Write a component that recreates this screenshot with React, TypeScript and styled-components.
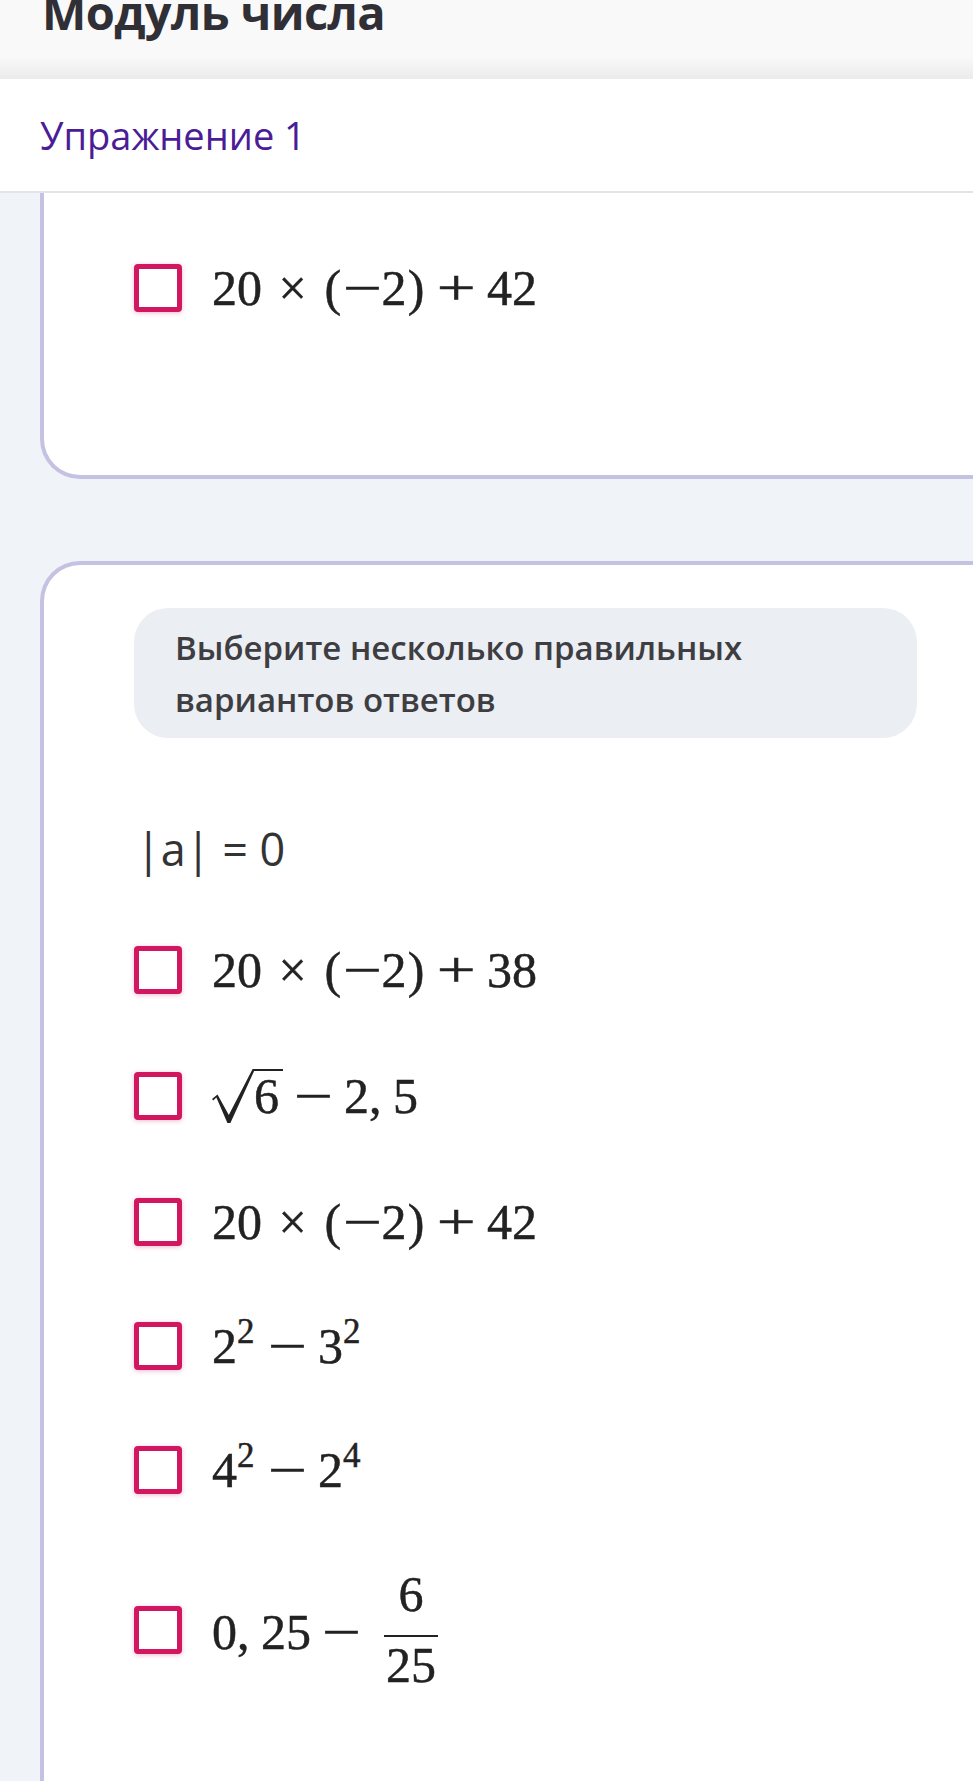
import styled, { createGlobalStyle } from "styled-components";

const GlobalStyle = createGlobalStyle`
  html,
  body {
    margin: 0;
    padding: 0;
    background: #f0f3f7;
  }
  body {
    font-family: "Open Sans", "Noto Sans", sans-serif;
  }
`;

type Piece =
  | { t: "n"; v: string }
  | { t: "bin"; v: string; stretch?: boolean }
  | { t: "neg" }
  | { t: "paren"; v: string }
  | { t: "comma" }
  | { t: "sup"; base: string; exp: string }
  | { t: "sqrt"; v: string }
  | { t: "frac"; num: string; den: string };

const product = (last: string): Piece[] => [
  { t: "n", v: "20" },
  { t: "bin", v: "×" },
  { t: "paren", v: "(" },
  { t: "neg" },
  { t: "n", v: "2" },
  { t: "paren", v: ")" },
  { t: "bin", v: "+", stretch: true },
  { t: "n", v: last },
];

const firstCard: Piece[][] = [product("42")];

const secondCard: Piece[][] = [
  product("38"),
  [
    { t: "sqrt", v: "6" },
    { t: "bin", v: "−", stretch: true },
    { t: "n", v: "2" },
    { t: "comma" },
    { t: "n", v: "5" },
  ],
  product("42"),
  [
    { t: "sup", base: "2", exp: "2" },
    { t: "bin", v: "−", stretch: true },
    { t: "sup", base: "3", exp: "2" },
  ],
  [
    { t: "sup", base: "4", exp: "2" },
    { t: "bin", v: "−", stretch: true },
    { t: "sup", base: "2", exp: "4" },
  ],
  [
    { t: "n", v: "0" },
    { t: "comma" },
    { t: "n", v: "25" },
    { t: "bin", v: "−", stretch: true },
    { t: "frac", num: "6", den: "25" },
  ],
];

function MathPiece({ p }: { p: Piece }) {
  switch (p.t) {
    case "n":
      return <>{p.v}</>;
    case "bin":
      return (
        <Bin>
          <Glyph $stretch={p.stretch}>{p.v}</Glyph>
        </Bin>
      );
    case "neg":
      return (
        <Neg>
          <Glyph $stretch>−</Glyph>
        </Neg>
      );
    case "paren":
      return <Paren>{p.v}</Paren>;
    case "comma":
      return <Comma>,</Comma>;
    case "sup":
      return (
        <>
          {p.base}
          <Sup>{p.exp}</Sup>
        </>
      );
    case "sqrt":
      return (
        <>
          <Radical viewBox="0 0 42 54" width="42" height="54">
            <path d="M0 30 L5.5 25.5 L16.8 46 L40.6 0 H42 V2.2 L18.4 54 H15.4 L4.4 28.6 L1.2 31.4 Z" />
          </Radical>
          <Radicand>{p.v}</Radicand>
        </>
      );
    case "frac":
      return (
        <Frac>
          <FracPart>{p.num}</FracPart>
          <FracBar />
          <FracPart>{p.den}</FracPart>
        </Frac>
      );
  }
}

function Option({ pieces }: { pieces: Piece[] }) {
  return (
    <OptionRow>
      <Checkbox type="button" aria-label="вариант" />
      <MathExpr>
        {pieces.map((p, i) => (
          <MathPiece key={i} p={p} />
        ))}
      </MathExpr>
    </OptionRow>
  );
}

export default function App() {
  return (
    <Page>
      <GlobalStyle />
      <Header>
        <Title>Модуль числа</Title>
      </Header>
      <TabBar>
        <TabLabel>Упражнение 1</TabLabel>
      </TabBar>

      <Card $part="tail">
        {firstCard.map((pieces, i) => (
          <Option key={i} pieces={pieces} />
        ))}
      </Card>

      <Card $part="head">
        <Hint>
          Выберите несколько правильных
          <br />
          вариантов ответов
        </Hint>
        <Prompt>|a| = 0</Prompt>
        <OptionList>
          {secondCard.map((pieces, i) => (
            <Option key={i} pieces={pieces} />
          ))}
        </OptionList>
      </Card>
    </Page>
  );
}

const Page = styled.div`
  overflow: hidden;
  min-height: 1781px;
`;

const Header = styled.header`
  height: 79px;
  overflow: hidden;
  padding-left: 42px;
  background: linear-gradient(#f9f9fa 72%, #ebebec);
`;

const Title = styled.h1`
  margin: -11px 0 0;
  font-size: 47px;
  line-height: 1;
  font-weight: 700;
  color: #302f36;
  letter-spacing: -0.6px;
`;

const TabBar = styled.nav`
  height: 112px;
  display: flex;
  align-items: center;
  padding-left: 40px;
  background: #fff;
  border-bottom: 2px solid #e1e4e9;
`;

const TabLabel = styled.span`
  font-size: 38px;
  color: #4a1d96;
`;

const Card = styled.section<{ $part: "head" | "tail" }>`
  margin: ${(p) => (p.$part === "head" ? "82px" : "0")} -38px 0 40px;
  background: #fff;
  border-left: 4px solid #c5c1e2;
  ${(p) =>
    p.$part === "tail"
      ? `
    border-bottom: 4px solid #c5c1e2;
    border-bottom-left-radius: 40px;
    padding: 33px 94px 125px 90px;
  `
      : `
    border-top: 4px solid #c5c1e2;
    border-top-left-radius: 40px;
    padding: 43px 94px 120px 90px;
  `}
`;

const Hint = styled.div`
  background: #ebeef2;
  border-radius: 34px;
  padding: 14px 41px 12px;
  font-size: 33px;
  line-height: 52px;
  font-weight: 600;
  color: #3e3e42;
`;

const Prompt = styled.div`
  margin: 83px 0 0 2px;
  font-size: 45px;
  line-height: 56px;
  color: #333;
`;

const OptionList = styled.div`
  margin-top: 31px;
  display: flex;
  flex-direction: column;
`;

const OptionRow = styled.div`
  display: flex;
  align-items: center;
  gap: 30px;
  padding: 37px 0;
`;

const Checkbox = styled.button`
  flex: none;
  width: 48px;
  height: 48px;
  box-sizing: border-box;
  padding: 0;
  background: #fff;
  border: 5px solid #d0175f;
  border-radius: 4px;
  box-shadow: 0 1px 5px rgba(208, 23, 95, 0.3);
`;

const MathExpr = styled.span`
  display: block;
  font-family: "Liberation Serif", "Times New Roman", serif;
  font-size: 50px;
  line-height: 1;
  color: #222;
  -webkit-text-stroke: 0.5px #222;
  white-space: nowrap;
`;

const Bin = styled.span`
  display: inline-block;
  width: 0.778em;
  margin: 0 0.222em;
  text-align: center;
`;

const Neg = styled.span`
  display: inline-block;
  width: 0.778em;
  text-align: center;
`;

const Glyph = styled.span<{ $stretch?: boolean }>`
  display: inline-block;
  transform: ${(p) => (p.$stretch ? "scaleX(1.38)" : "none")};
`;

const Paren = styled.span`
  display: inline-block;
  width: 0.389em;
  text-align: center;
`;

const Comma = styled.span`
  display: inline-block;
  width: 0.278em;
  margin-right: 0.2em;
`;

const Sup = styled.span`
  font-size: 0.7em;
  line-height: 0;
  vertical-align: 0.58em;
  margin-right: 0.07em;
`;

const Radical = styled.svg`
  vertical-align: -10px;
  fill: #222;
`;

const Radicand = styled.span`
  display: inline-block;
  border-top: 2px solid #222;
  padding-right: 0.08em;
  line-height: 1;
`;

const Frac = styled.span`
  display: inline-flex;
  flex-direction: column;
  align-items: center;
  margin-left: 0.28em;
  vertical-align: 0.76em;
`;

const FracPart = styled.span`
  line-height: 1;
`;

const FracBar = styled.span`
  align-self: stretch;
  height: 2px;
  margin: 16px -2px 3px;
  background: #222;
`;
